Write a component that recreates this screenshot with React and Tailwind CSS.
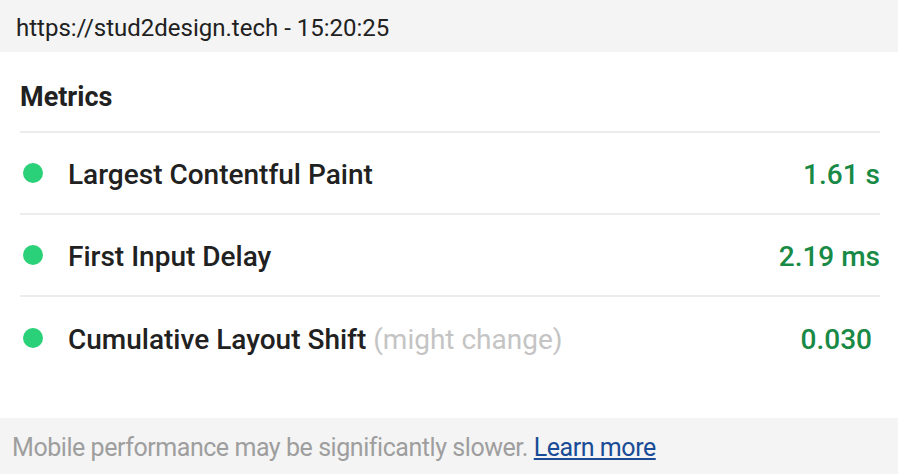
import React from "react";

const metrics = [
  { name: "Largest Contentful Paint", value: "1.61 s" },
  { name: "First Input Delay", value: "2.19 ms" },
  { name: "Cumulative Layout Shift", note: "(might change)", value: "0.030", pad: true },
];

export default function App() {
  return (
    <div
      className="w-[898px] h-[474px] bg-white flex flex-col overflow-hidden text-[#212121]"
      style={{ fontFamily: "Roboto, 'Liberation Sans', sans-serif" }}
    >
      {/* header */}
      <div className="h-[52px] bg-[#f4f4f4] flex items-center px-4 pt-1 text-[24px] shrink-0">
        https://stud2design.tech - 15:20:25
      </div>

      {/* metrics */}
      <div className="flex-1 pl-5 pr-[18px]">
        <h2 className="h-[81px] flex items-center pt-[11px] text-[27px] font-bold border-b-2 border-[#ececec]">
          Metrics
        </h2>
        {metrics.map((m, i) => (
          <div
            key={m.name}
            className={
              "h-[82px] flex items-center " +
              (i < metrics.length - 1 ? "border-b-2 border-[#ececec]" : "")
            }
          >
            <span className="w-5 h-5 rounded-full bg-[#2bd178] ml-[3px] mr-[25px] shrink-0" />
            <span className="text-[28px] font-medium flex-1 whitespace-nowrap pt-1">
              {m.name}
              {m.note && <span className="text-[#c4c4c4] font-normal"> {m.note}</span>}
            </span>
            <span className={"text-[28px] font-medium text-[#188a46] pt-1 " + (m.pad ? "mr-2" : "")}>
              {m.value}
            </span>
          </div>
        ))}
      </div>

      {/* footer */}
      <div className="h-[56px] bg-[#f4f4f4] flex items-center px-3 pt-1 text-[25px] text-[#9e9e9e] shrink-0 tracking-[-0.45px] whitespace-nowrap">
        Mobile performance may be significantly slower.&nbsp;
        <a href="#" className="text-[#1a4b96] underline">Learn more</a>
      </div>
    </div>
  );
}
